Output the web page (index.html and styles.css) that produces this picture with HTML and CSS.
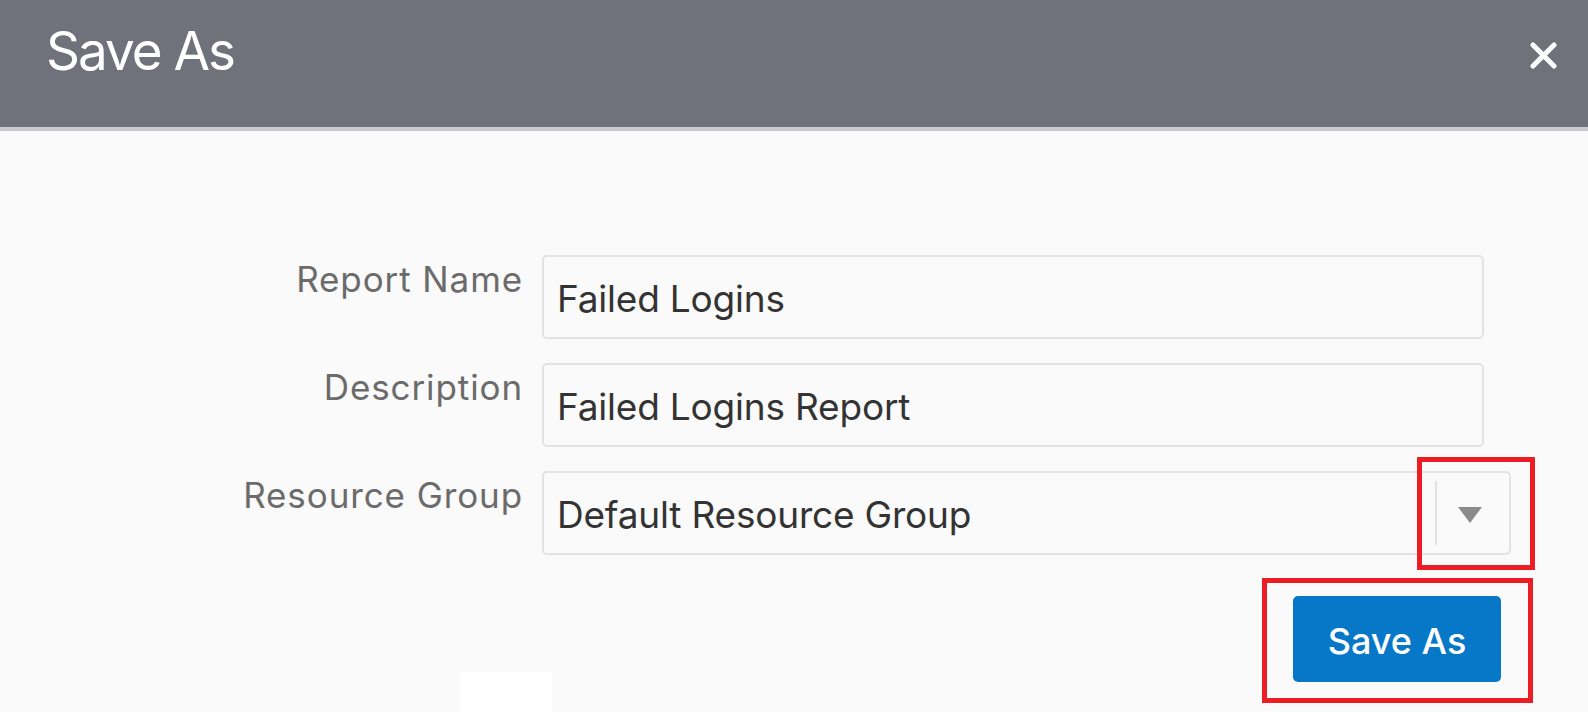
FILE: index.html
```html
<!DOCTYPE html>
<html>
<head>
<meta charset="utf-8">
<link rel="stylesheet" href="styles.css">
</head>
<body>
<div class="dialog">
  <header class="dlg-header">
    <h1 class="dlg-title">Save As</h1>
    <button class="dlg-close" aria-label="Close">
      <svg width="27" height="27" viewBox="0 0 27 27"><path d="M3 3 L24 24 M24 3 L3 24" stroke="#fff" stroke-width="5" stroke-linecap="round"/></svg>
    </button>
  </header>
  <main class="dlg-body">
    <div class="form-row">
      <label class="f-label">Report Name</label>
      <div class="f-input">Failed Logins</div>
    </div>
    <div class="form-row">
      <label class="f-label">Description</label>
      <div class="f-input">Failed Logins Report</div>
    </div>
    <div class="form-row">
      <label class="f-label">Resource Group</label>
      <div class="f-input f-select">
        <span class="sel-value">Default Resource Group</span>
        <span class="sel-sep"></span>
        <span class="sel-arrow"></span>
      </div>
    </div>
    <div class="actions">
      <button class="btn-primary">Save As</button>
    </div>
  </main>
  <div class="mark mark-select"></div>
  <div class="mark mark-button"></div>
  <div class="white-patch"></div>
</div>
</body>
</html>
```
FILE: styles.css
```css
html, body {
  margin: 0;
  padding: 0;
  background: #fafafa;
  font-family: Inter, "Noto Sans", "Liberation Sans", sans-serif;
}
.dialog {
  position: relative;
  width: 1588px;
  height: 712px;
  overflow: hidden;
  background: #fafafa;
}
.dlg-header {
  box-sizing: border-box;
  background: #6f727b;
  border-bottom: 4px solid #c9cacd;
  height: 131px;
  display: flex;
  justify-content: space-between;
  align-items: flex-start;
  padding: 25px 31px 0 46px;
}
.dlg-title {
  margin: 0;
  color: #fff;
  font-size: 53px;
  line-height: 53px;
  font-weight: 400;
  letter-spacing: -2px;
}
.dlg-close {
  margin-top: 17px;
  padding: 0;
  border: 0;
  background: transparent;
  width: 27px;
  height: 27px;
  display: block;
}
.dlg-close svg { display: block; }
.dlg-body {
  padding-top: 124px;
  width: 1511px;
}
.form-row {
  display: flex;
  align-items: flex-start;
  margin-bottom: 24px;
}
.f-label {
  width: 523px;
  margin-right: 19px;
  text-align: right;
  color: #6b6b6b;
  font-size: 35px;
  line-height: 35px;
  padding-top: 7px;
  box-sizing: border-box;
  letter-spacing: 0.9px;
}
.f-input {
  width: 942px;
  height: 84px;
  box-sizing: border-box;
  border: 2px solid #e3e3e3;
  border-radius: 5px;
  background: #fafafa;
  padding: 23px 13px 0 13px;
  color: #333;
  font-size: 37px;
  line-height: 38px;
  letter-spacing: -0.2px;
}
.f-select {
  width: 969px;
  display: flex;
  align-items: flex-start;
  position: relative;
}
.sel-value { flex: 1; }
.sel-sep {
  width: 2px;
  height: 64px;
  background: #e1e1e1;
  margin-top: -15px;
  margin-right: 21px;
}
.sel-arrow {
  width: 0;
  height: 0;
  border-left: 12px solid transparent;
  border-right: 12px solid transparent;
  border-top: 16px solid #8b8b8b;
  margin-top: 11px;
  margin-right: 14px;
}
.form-row:last-of-type { margin-bottom: 0; }
.actions {
  display: flex;
  justify-content: flex-end;
  padding-right: 10px;
  padding-top: 17px;
}
.btn-primary {
  width: 208px;
  height: 86px;
  border: 0;
  border-radius: 5px;
  background: #0778c8;
  color: #fff;
  font-family: Inter, "Noto Sans", sans-serif;
  font-size: 36px;
  font-weight: 500;
  padding: 3px 0 0;
}
.mark {
  position: absolute;
  border: 5px solid #ec1d25;
  box-sizing: border-box;
}
.mark-select {
  left: 1417px;
  top: 457px;
  width: 118px;
  height: 113px;
}
.mark-button {
  left: 1262px;
  top: 578px;
  width: 271px;
  height: 125px;
}
.white-patch {
  position: absolute;
  left: 460px;
  top: 672px;
  width: 92px;
  height: 40px;
  background: #fff;
}
```
